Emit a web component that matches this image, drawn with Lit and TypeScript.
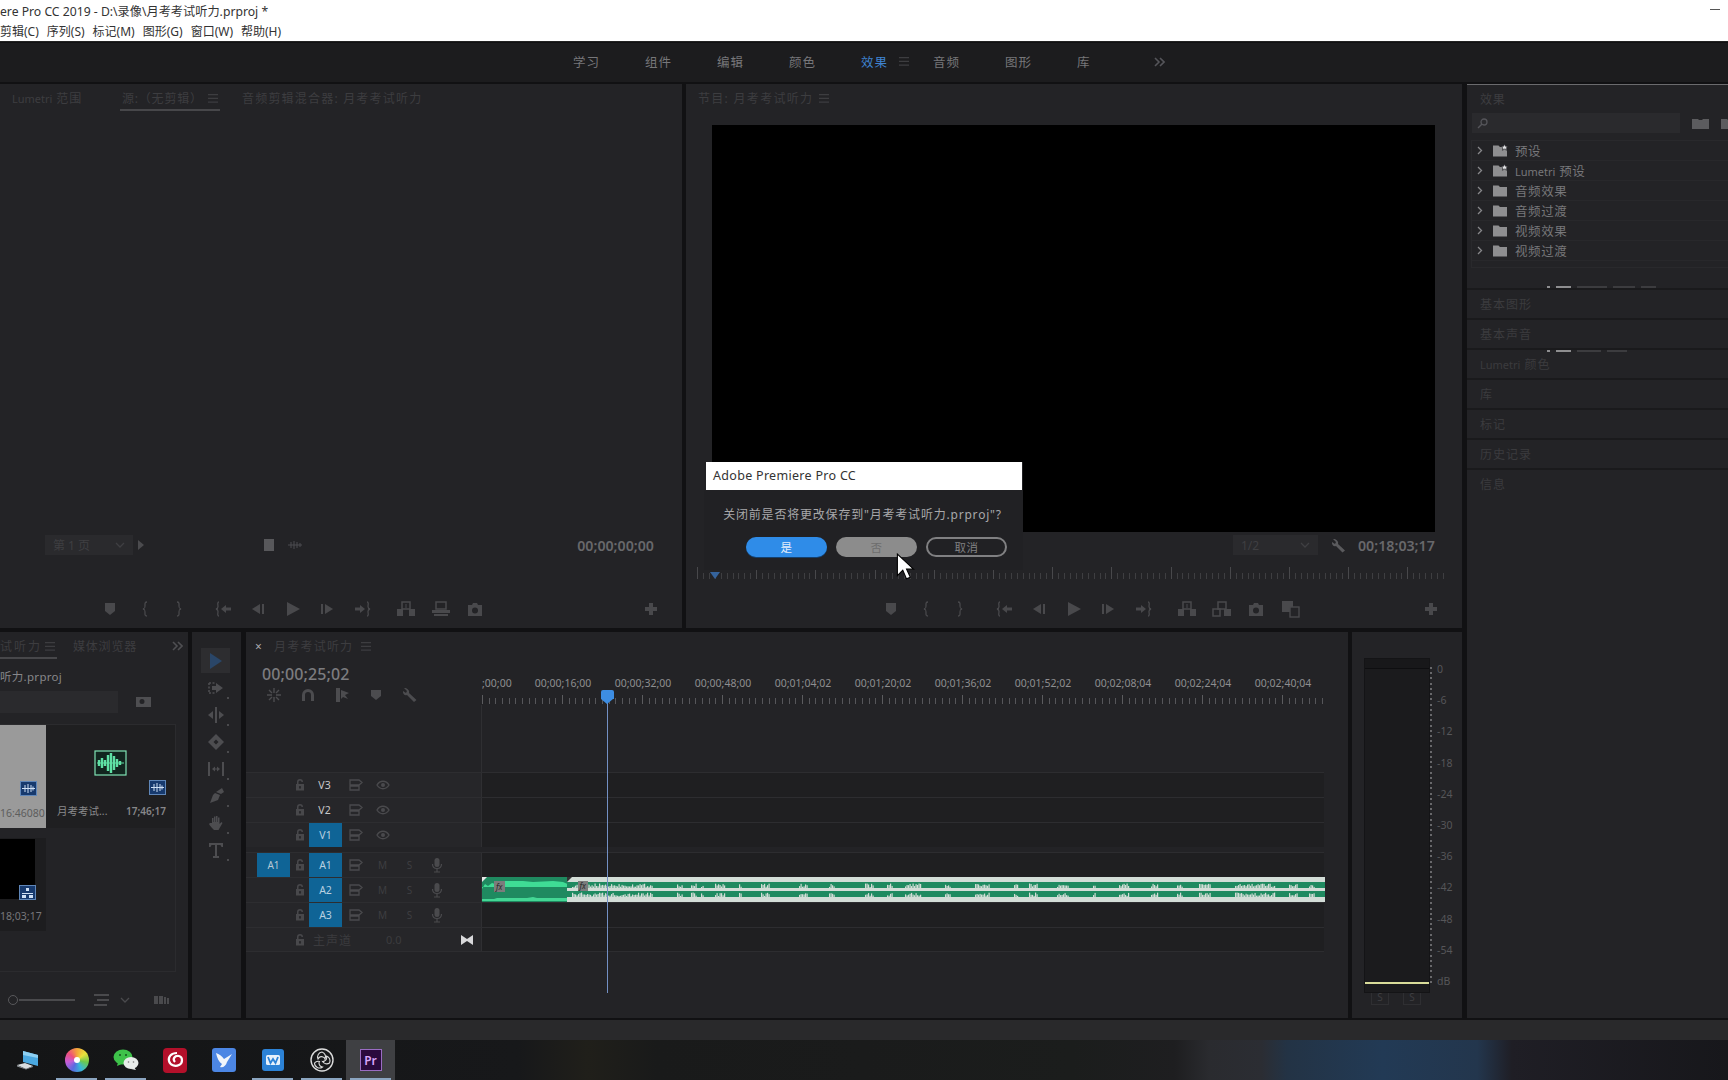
import { LitElement, css, html, svg } from 'lit';
import { customElement } from 'lit/decorators.js';

const icon = (w: number, h: number, body: unknown) =>
  html`<svg width=${w} height=${h} viewBox="0 0 ${w} ${h}" fill="currentColor">${body}</svg>`;

// transport strip icons, shared by the source and program monitors
const marker = icon(14, 14, svg`<path d="M2 1h10v8l-5 4-5-4z"/>`);
const braceL = icon(10, 16, svg`<path d="M7 1C4.500 1 5 3 5 5S5 7.500 3 8c2 .5 2 1 2 3s-.5 4 2 4" fill="none" stroke="currentColor" stroke-width="1.300"/>`);
const braceR = icon(10, 16, svg`<path d="M3 1c2.500 0 2 2 2 4s0 2.500 2 3c-2 .5-2 1-2 3s.5 4-2 4" fill="none" stroke="currentColor" stroke-width="1.300"/>`);
const goIn = icon(18, 16, svg`<path d="M4 1C2 1 3 4 3 5.500S3 7.500 1 8c2 .5 2 1 2 2.500S2 15 4 15" fill="none" stroke="currentColor" stroke-width="1.300"/><path d="M6 8l5-4v2.500h5v3h-5V12z"/>`);
const goOut = icon(18, 16, svg`<path d="M14 1c2 0 1 3 1 4.500s0 2 2 2.500c-2 .5-2 1-2 2.500s1 4.500-1 4.500" fill="none" stroke="currentColor" stroke-width="1.300"/><path d="M12 8L7 4v2.500H2v3h5V12z"/>`);
const stepBack = icon(14, 14, svg`<path d="M9 2v10L1 7z"/><rect x="11" y="2" width="2" height="10"/>`);
const play = icon(16, 16, svg`<path d="M2 1l13 7-13 7z"/>`);
const stepFwd = icon(14, 14, svg`<rect x="1" y="2" width="2" height="10"/><path d="M5 2v10l8-5z"/>`);
const insert = icon(20, 16, svg`<path d="M6 1h8v7H6z" fill="none" stroke="currentColor" stroke-width="1.500"/><path d="M1 8h6v7H1zM13 8h6v7h-6z"/><path d="M10 3v4" stroke="currentColor"/>`);
const overwrite = icon(20, 16, svg`<path d="M5 1h10v7H5z" fill="none" stroke="currentColor" stroke-width="1.500"/><path d="M1 9h18v3H1zM3 13h14v2H3z"/>`);
const insert2 = icon(20, 16, svg`<path d="M6 1h8v7H6z" fill="none" stroke="currentColor" stroke-width="1.500"/><path d="M1 8h7v7H1z" fill="none" stroke="currentColor" stroke-width="1.500"/><path d="M12 8h7v7h-7z"/>`);
const camera = icon(16, 15, svg`<path fill-rule="evenodd" d="M1 3h4l1-2h4l1 2h4v11H1zM8 5.500a3 3 0 100 6 3 3 0 000-6z"/>`);
const compare = icon(20, 18, svg`<rect x="1" y="1" width="11" height="11"/><rect x="9" y="7" width="9" height="10" fill="#242427" stroke="currentColor" stroke-width="1.400"/>`);
const plus = icon(14, 14, svg`<path d="M5 1h4v4h4v4H9v4H5V9H1V5h4z"/>`);
const menuLines = icon(10, 9, svg`<path d="M0 0h10v1.200H0zM0 3.800h10V5H0zM0 7.600h10v1.200H0z"/>`);
const chevDown = icon(10, 6, svg`<path d="M1 1l4 4 4-4" fill="none" stroke="currentColor" stroke-width="1.300"/>`);
const chevDouble = icon(11, 10, svg`<path d="M1 1l4 4-4 4M6 1l4 4-4 4" fill="none" stroke="currentColor" stroke-width="1.600"/>`);
const wrench = icon(15, 15, svg`<path d="M2 1l3 3-1 2-3-2c-.5 3 2 5 4 4l6.500 6.500 2.500-2L7 6C8 3.500 5 .5 2 1z"/>`);

const lock = icon(10, 12, svg`<path fill-rule="evenodd" d="M1 5h1V3a3 3 0 016 0h-1.500a1.500 1.500 0 00-3 0v2H9v6.500H1zM5 7a1 1 0 00-.5 1.900V10h1V8.900A1 1 0 005 7z"/>`);
const toggle = icon(14, 12, svg`<path d="M1 1h9l3 2.500L10 6H1zM1 7h9v4H1z" fill="none" stroke="currentColor" stroke-width="1.300"/>`);
const eye = icon(14, 10, svg`<path d="M1 5c3-5 9-5 12 0-3 5-9 5-12 0z" fill="none" stroke="currentColor" stroke-width="1.400"/><circle cx="7" cy="5" r="2"/>`);
const mic = icon(12, 16, svg`<rect x="3.500" y="1" width="5" height="9" rx="2.500"/><path d="M1.500 7c0 6 9 6 9 0M6 12v3M3 15h6" fill="none" stroke="currentColor" stroke-width="1.200"/>`);

const badgeAudio = icon(17, 15, svg`<rect x=".5" y=".5" width="16" height="14" fill="#173a6e" stroke="#5f86b8"/><path d="M2 7.500h13M5 4v7M8 3v9M11 4v7M13 5.500v4" stroke="#cfe0f5" fill="none"/>`);
const badgeSeq = icon(17, 15, svg`<rect x=".5" y=".5" width="16" height="14" fill="#173a6e" stroke="#5f86b8"/><path d="M7 3h3v3H7zM3 8h11v1H3zM3 10h4v3H3zM10 10h4v3h-4z" fill="#cfe0f5"/>`);

const folder = (star: boolean) => html`<svg class="folder" width="16" height="13" viewBox="0 0 16 13">
  <path d="M1 3V1.500h5.500L8 3h7v9.500H1z" fill="#8e8e90"/>
  ${star ? svg`<path d="M12.500 0l1 2.200 2.300.2-1.700 1.600.5 2.300-2.100-1.200-2.100 1.200.5-2.300L9.200 2.400l2.300-.2z" fill="#e0e0e2" stroke="#232326" stroke-width=".7"/>` : ''}
</svg>`;

// small deterministic noise so the waveform stays the same between runs
const noise = (i: number) => {
  const v = Math.sin(i * 12.9898) * 43758.5453;
  return v - Math.floor(v);
};

const clusters: [number, number][] = [
  [5, 80], [110, 6], [124, 5], [134, 3], [148, 10], [172, 3], [194, 8], [232, 8], [262, 5], [298, 9],
  [320, 5], [338, 16], [378, 6], [408, 14], [447, 4], [462, 8], [490, 12], [526, 3], [552, 10], [584, 7],
  [610, 5], [632, 12], [668, 40], [722, 8], [742, 6],
];

@customElement('app-root')
export class AppRoot extends LitElement {
  static styles = css`
    :host {
      display: block;
      width: 1728px;
      height: 1080px;
      overflow: hidden;
      position: relative;
      background: #111113;
      font-family: "Noto Sans", "Noto Sans CJK SC", sans-serif;
      color: #3d3d40;
      font-size: 12px;
    }
    svg { display: block; flex: none; }
    .lat { letter-spacing: 0; font-size: 11px; }

    /* window chrome */
    .titlebar {
      height: 42px;
      background: #fff;
      color: #333;
      font-size: 12.200px;
      display: flex;
      flex-direction: column;
      box-sizing: border-box;
      padding-top: 2px;
      position: relative;
      border-bottom: 1px solid #222;
    }
    .titlebar .line { height: 19px; line-height: 19px; white-space: nowrap; }
    .menu { display: flex; gap: 8px; margin-top: 1px; font-size: 12px; }
    .minimize { position: absolute; top: 9px; right: 8px; width: 10px; height: 1px; background: #555; }

    .workspaces {
      height: 39px;
      margin-top: 1px;
      padding: 0 0 2px 573px;
      background: #1c1c1e;
      display: flex;
      align-items: center;
      color: #77777a;
      font-size: 12.500px;
      letter-spacing: 1px;
      box-sizing: border-box;
    }
    .workspaces span { width: 72px; flex: none; }
    .workspaces .active { color: #3f83d0; width: 38px; }
    .workspaces .tab-menu { width: 34px; color: #3d3d40; display: flex; }
    .workspaces .more { color: #55555a; margin-left: 5px; }

    .main { display: flex; gap: 5px; height: 934px; margin-top: 2px; }
    .left { width: 1462px; display: flex; flex-direction: column; gap: 4px; flex: none; }
    .top-row { display: flex; gap: 4px; height: 544px; flex: none; }
    .bottom-row { display: flex; height: 386px; flex: none; }
    .panel { background: #232326; position: relative; display: flex; flex-direction: column; box-sizing: border-box; }
    .tabs { height: 28px; display: flex; align-items: center; flex: none; letter-spacing: .8px; white-space: nowrap; }
    .tab-on { display: flex; align-items: center; gap: 4px; height: 100%; position: relative; }
    .tab-on::after { content: ""; position: absolute; left: -2px; right: -2px; bottom: 1px; height: 2px; background: #47474a; }

    /* monitors */
    .source { width: 682px; }
    .source .tabs { padding-left: 12px; }
    .source .tab-lumetri { width: 110px; flex: none; }
    .source .tab-on { width: 96px; flex: none; justify-content: space-between; }
    .source .tab-mix { margin-left: 24px; letter-spacing: 1.200px; }
    .mon-body { flex: 1; }
    .mon-info { height: 22px; display: flex; align-items: center; flex: none; }
    .timecode { font-size: 14.200px; font-weight: 600; color: #68686b; letter-spacing: 0; }
    .dropdown {
      background: #2a2a2d;
      height: 20px;
      display: flex;
      align-items: center;
      justify-content: space-between;
      padding: 0 8px;
      box-sizing: border-box;
      color: #3f3f42;
    }
    .source .mon-info { padding-left: 45px; }
    .source .dropdown { width: 88px; }
    .tri { width: 0; height: 0; border-left: 6px solid #4b4b4e; border-top: 5px solid transparent; border-bottom: 5px solid transparent; margin-left: 5px; }
    .clip-btn { width: 10px; height: 12px; background: #58585b; margin-left: 120px; }
    .wave-btn { color: #4d4d50; margin-left: 14px; }
    .source .timecode { margin-left: auto; margin-right: 28px; }

    .transport { height: 32px; display: flex; align-items: center; color: #49494c; flex: none; }
    .transport > div { width: 34.500px; flex: none; display: flex; justify-content: center; }
    .transport .sep { margin-left: 10px; }
    .transport .add { margin-left: auto; margin-right: 24px; width: auto; }
    .source .transport { padding-left: 93px; margin-top: 37px; }
    .source .foot-pad { height: 3px; flex: none; }
    .program { width: 776px; }
    .program .tabs { padding-left: 12px; gap: 6px; letter-spacing: 1.300px; }
    .program .transport { padding-left: 188px; margin-top: 14px; }
    .video { background: #000; height: 407px; margin: 13px 27px 0 26px; flex: none; }
    .program .mon-info { margin-top: 2px; padding-left: 547px; }
    .program .dropdown { width: 85px; }
    .program .wrench { color: #5a5a5d; margin-left: 13px; }
    .program .timecode { margin-left: 12px; }
    .mon-ruler {
      height: 12px;
      margin: 11px 15px 0 11px;
      flex: none;
      position: relative;
      background:
        repeating-linear-gradient(90deg, #48484b 0 1px, transparent 1px 59.200px) 0 0 / 100% 12px no-repeat,
        repeating-linear-gradient(90deg, #3e3e41 0 1px, transparent 1px 5.920px) 0 100% / 100% 6px no-repeat;
    }
    .mon-ruler .mark { position: absolute; left: 13px; top: 5px; width: 0; height: 0; border-left: 5px solid transparent; border-right: 5px solid transparent; border-top: 7px solid #35639c; }

    /* project panel */
    .project { width: 188px; overflow: hidden; }
    .project .tabs { gap: 18px; }
    .project .tab-on { letter-spacing: 2px; gap: 3px; }
    .project .tabs .more { margin-left: auto; margin-right: 5px; color: #4f4f52; }
    .proj-name { height: 20px; line-height: 20px; color: #87878a; font-size: 11.500px; margin-top: 7px; flex: none; letter-spacing: .3px; }
    .proj-search { display: flex; align-items: center; height: 22px; margin-top: 4px; flex: none; }
    .proj-field { width: 118px; height: 100%; background: #2a2a2d; }
    .proj-folder { margin-left: 18px; color: #4e4e51; }
    .bin {
      width: 176px;
      height: 248px;
      margin-top: 11px;
      flex: none;
      box-sizing: border-box;
      border: 1px solid #2b2b2e;
      border-left: 0;
      display: grid;
      grid-template-columns: 46px 129px;
      grid-template-rows: 103px 1fr;
    }
    .tile { display: flex; flex-direction: column; position: relative; font-size: 10.500px; }
    .thumb-grey { background: #9a9a9a; color: #5d5d5d; }
    .tile-audio { background: #1f1f21; color: #8a8a8c; }
    .tile-seq { background: #1d1d1f; margin-top: 10px; color: #77777a; height: 93px; }
    .thumb-black { background: #000; width: 35px; height: 60px; margin-top: 1px; }
    .tile-seq .seq-row { display: flex; justify-content: flex-end; margin: -14px 10px 0 0; }
    .tile-seq .seq-time { margin-top: 9px; line-height: 15px; }
    .tile-body { flex: 1; display: flex; flex-direction: column; justify-content: flex-end; }
    .grey-badge { display: flex; justify-content: flex-end; padding-right: 9px; }
    .grey-time { line-height: 15px; margin: 10px 0 7px; text-align: right; padding-right: 9px; white-space: nowrap; }
    .audio-icon { margin: 25px auto 0; }
    .audio-badge { display: flex; justify-content: flex-end; padding-right: 9px; margin-top: 4px; }
    .audio-meta { display: flex; justify-content: space-between; align-items: center; padding: 0 9px 0 11px; margin-top: 9px; line-height: 15px; }
    .audio-meta b { font-weight: 600; color: #87878a; font-size: 10px; }
    .proj-foot { display: flex; align-items: center; height: 20px; margin-top: 18px; color: #4a4a4d; flex: none; }
    .knob { width: 10px; height: 10px; border: 1px solid #58585b; border-radius: 50%; margin-left: 8px; flex: none; box-sizing: border-box; }
    .slide { width: 56px; height: 2px; background: #4a4a4d; margin-left: 1px; }
    .proj-foot .lines { margin-left: 19px; }
    .proj-foot .chev { margin-left: 11px; }
    .proj-foot .free { margin-left: 24px; }

    /* tools */
    .tools { width: 49px; margin-left: 4px; align-items: center; color: #4d4d50; padding-right: 2px; }
    .tool { height: 27px; display: flex; align-items: center; justify-content: center; flex: none; width: 29px; position: relative; }
    .tool.dot::after { content: ""; position: absolute; right: 1px; bottom: 2px; width: 2px; height: 2px; background: #4a4a4d; }
    .tool.on { background: #2d2d30; height: 25px; margin-top: 16px; margin-bottom: 1px; color: #2a4668; }

    /* timeline */
    .timeline { width: 1102px; margin-left: 5px; }
    .timeline .tabs { padding-left: 9px; gap: 8px; letter-spacing: 1.200px; }
    .timeline .tabs .close { color: #a9a9ab; font-size: 12px; margin-right: 3px; }
    .tl-body { width: 1078px; flex: 1; position: relative; }
    .tl-top { height: 112px; display: grid; grid-template-columns: 235px 1fr; }
    .tl-tc { font-size: 16px; color: #7c7c7f; padding: 4px 0 0 16px; line-height: 20px; font-weight: 500; letter-spacing: .1px; }
    .tl-tools { display: flex; color: #4c4c4f; margin: 3px 0 0 11px; }
    .tl-tools div { width: 34px; display: flex; justify-content: center; }
    .ruler-col { border-left: 1px solid #2f2f32; border-image: linear-gradient(#0000 45px, #2f2f32 45px) 1; }
    .labels { display: flex; height: 17px; margin-top: 15px; font-size: 10.500px; color: #8e8e90; line-height: 17px; }
    .labels span { width: 80px; text-align: center; flex: none; }
    .labels .first { width: 41px; text-align: left; }
    .ticks {
      height: 9px;
      margin-top: 3px;
      background:
        repeating-linear-gradient(90deg, #5c5c5f 0 1px, transparent 1px 80px) 0 0 / 100% 9px no-repeat,
        repeating-linear-gradient(90deg, #56565a 0 1px, transparent 1px 6.667px) 0 100% / 100% 6px no-repeat;
    }
    .row { height: 25px; display: flex; box-sizing: border-box; border-top: 1px solid #2d2d30; }
    .row.gap-after { margin-bottom: 5px; }
    .row.last { border-bottom: 1px solid #2d2d30; height: 25px; }
    .head { width: 235px; flex: none; display: flex; align-items: center; background: #262629; color: #48484b; }
    .lane { flex: 1; background: #1f1f21; border-left: 1px solid #2f2f32; position: relative; }
    .patch { width: 33px; height: 100%; margin-left: 11px; flex: none; display: flex; align-items: center; justify-content: center; font-size: 10px; color: #b8c8d4; }
    .patch.on { background: #0f6496; }
    .slot-lock { width: 19px; display: flex; justify-content: center; flex: none; }
    .target { width: 31px; margin-right: 2px; height: 100%; flex: none; display: flex; align-items: center; justify-content: center; font-size: 10.500px; color: #c8c8ca; }
    .target.on { background: #0f6496; color: #b8d0e0; width: 33px; margin-right: 0; }
    .slot { width: 27px; display: flex; justify-content: center; flex: none; font-size: 10px; color: #3e3e41; }
    .slot.ic { color: #4a4a4d; }
    .master-name { color: #3b3b3e; letter-spacing: 1px; width: 77px; padding-left: 4px; box-sizing: border-box; }
    .master-val { color: #3c3c3f; font-size: 11px; }
    .bow { margin-left: auto; margin-right: 8px; color: #d8d8da; }

    .clip { position: absolute; left: 0; right: 0; top: -1px; height: 25px; display: flex; }
    .playhead { position: absolute; left: 361px; top: 30px; bottom: 25px; width: 1px; background: #7390c4; }
    .playhead::before { content: ""; position: absolute; left: -6px; top: 0; width: 13px; height: 9px; background: #3d8de2; border-radius: 2px 2px 0 0; }
    .playhead::after { content: ""; position: absolute; left: -6px; top: 9px; border-left: 6.500px solid transparent; border-right: 6.500px solid transparent; border-top: 5px solid #3d8de2; }

    /* meter */
    .meter { width: 110px; margin-left: 4px; padding: 26px 0 0 12px; }
    .meter-wrap { display: flex; height: 335px; }
    .meter-bar { width: 66px; background: #1b1b1d; border: 1px solid #141416; box-sizing: border-box; position: relative; display: flex; flex-direction: column; }
    .meter-peak { height: 9px; background: #18181a; border-bottom: 1px solid #0e0e10; flex: none; }
    .meter-floor { margin-top: auto; height: 2px; background: #d9dc9a; margin-bottom: 8px; flex: none; }
    .scale {
      width: 4px;
      margin: 9px 0 8px 0;
      background: repeating-linear-gradient(#68686b 0 2px, transparent 2px 5.230px);
      background-size: 2px 100%;
      background-repeat: no-repeat;
      background-position: 0 0;
    }
    .db { display: flex; flex-direction: column; justify-content: space-between; margin: 5px 0 0 3px; height: 325px; color: #565659; font-size: 10.500px; line-height: 13px; }
    .solos { display: flex; gap: 14px; margin: -5px 0 0 7px; }
    .solos span { width: 18px; height: 17px; border: 1px solid #2f2f32; box-sizing: border-box; display: flex; align-items: center; justify-content: center; font-size: 10px; color: #3e3e41; }

    /* effects column */
    .right { flex: 1; border-top: 1px solid #6b6b6e; background: #232326; position: relative; }
    .right .tabs { padding-left: 13px; height: 28px; }
    .fx-search { display: flex; align-items: center; height: 20px; margin: 0 0 0 5px; flex: none; }
    .fx-field { width: 208px; height: 20px; background: #2a2a2d; display: flex; align-items: center; padding-left: 5px; box-sizing: border-box; color: #55555a; flex: none; }
    .fx-search .fxi { color: #5c5c5f; margin-left: 12px; flex: none; }
    .tree { margin: 7px 0 0 4px; border: 1px solid #29292c; border-right: 0; height: 128px; box-sizing: border-box; }
    .tree-row { height: 20px; display: flex; align-items: center; border-bottom: 1px solid #28282b; color: #77777a; font-size: 12.500px; letter-spacing: .6px; box-sizing: border-box; }
    .tree-row .ch { width: 20px; padding-left: 5px; box-sizing: border-box; color: #87878a; flex: none; }
    .tree-row .folder { margin-right: 7px; }
    .frag { height: 3px; margin-top: 17px; display: flex; align-items: center; padding-left: 80px; gap: 6px; }
    .frag i { height: 2px; background: #8e8e90; display: block; }
    .frag i.dim { background: #3c3c3f; }
    .frag.second { position: absolute; left: 0; top: 264px; margin: 0; }
    .collapsed { height: 30px; display: flex; align-items: center; padding-left: 13px; border-top: 2px solid #1a1a1c; box-sizing: border-box; color: #3b3b3e; letter-spacing: 1px; }

    /* bottom of screen */
    .status { height: 20px; background: #29292b; margin-top: 2px; }
    .taskbar {
      height: 40px;
      display: flex;
      align-items: center;
      position: relative;
      background: linear-gradient(90deg, #141516 0, #17181a 30%, #201f1a 34%, #191a1a 38%, #1a1b1b 50%, #1b1d1c 62%, #1e1e20 68%, #2a2b2f 70%, #2b2d33 73%, #233345 74.500%, #223a55 80%, #23364d 85.500%, #1f1e25 87.500%, #17171b 100%);
    }
    .task { width: 49px; height: 40px; flex: none; display: flex; align-items: center; justify-content: center; position: relative; }
    .task:first-child { margin-left: 3px; }
    .task.open::after { content: ""; position: absolute; left: 4px; right: 4px; bottom: 0; height: 2px; background: #8ba5c0; }
    .task.sel { background: #3f4043; }
    .pr { width: 22px; height: 22px; background: #2a0a3d; border: 1px solid #9a6cc2; color: #d7a5fb; display: flex; align-items: center; justify-content: center; font-size: 12px; font-weight: 600; box-sizing: border-box; }
    .swirl { width: 24px; height: 24px; border-radius: 50%; background: conic-gradient(#f3a43a, #e9e23c, #6cc84c, #37b7d8, #5a6ae0, #c35cd8, #ee4f7a, #f3a43a); display: flex; align-items: center; justify-content: center; }
    .swirl::after { content: ""; width: 6px; height: 6px; background: #fff; border-radius: 50%; }

    /* save dialog, floats over the program monitor */
    .dialog { position: absolute; left: 704px; top: 462px; width: 319px; height: 108px; background: #212124; display: flex; flex-direction: column; }
    .dlg-title { background: #fff; color: #333; height: 28px; margin-left: 2px; width: 316px; line-height: 28px; padding-left: 7px; box-sizing: border-box; font-size: 12.500px; letter-spacing: .3px; flex: none; }
    .dlg-text { text-align: center; color: #a8a8aa; font-size: 12px; letter-spacing: .8px; margin-top: 16px; line-height: 17px; padding-right: 2px; }
    .dlg-btns { display: flex; gap: 9px; margin: 14px 0 0 42px; }
    .btn { width: 81px; height: 20px; border-radius: 10px; display: flex; align-items: center; justify-content: center; font-size: 11.500px; box-sizing: border-box; letter-spacing: .5px; }
    .btn.yes { background: #2f8ce8; color: #e4eefa; box-shadow: 0 1px 0 #14406e; }
    .btn.no { background: #8c8c8c; color: #6d6d6d; }
    .btn.cancel { border: 2px solid #808082; color: #808082; }
    .cursor { position: absolute; left: 896px; top: 553px; }
  `;

  private transport(withCompare: boolean) {
    return html`<div class="transport">
      <div>${marker}</div><div>${braceL}</div><div>${braceR}</div>
      <div class="sep">${goIn}</div><div>${stepBack}</div><div>${play}</div><div>${stepFwd}</div><div>${goOut}</div>
      <div class="sep">${insert}</div><div>${withCompare ? insert2 : overwrite}</div><div>${camera}</div>
      ${withCompare ? html`<div>${compare}</div>` : ''}
      <div class="add">${plus}</div>
    </div>`;
  }

  private sourceMonitor() {
    return html`<div class="panel source">
      <div class="tabs">
        <span class="tab-lumetri"><span class="lat">Lumetri</span> 范围</span>
        <div class="tab-on"><span>源:（无剪辑）</span>${menuLines}</div>
        <span class="tab-mix">音频剪辑混合器: 月考考试听力</span>
      </div>
      <div class="mon-body"></div>
      <div class="mon-info">
        <div class="dropdown"><span>第 1 页</span>${chevDown}</div>
        <div class="tri"></div>
        <div class="clip-btn"></div>
        <div class="wave-btn">${icon(14, 10, svg`<path d="M0 5h14M3 2v6M6 1v8M9 2v6M12 3v4" stroke="currentColor" fill="none"/>`)}</div>
        <div class="timecode">00;00;00;00</div>
      </div>
      ${this.transport(false)}
      <div class="foot-pad"></div>
    </div>`;
  }

  private programMonitor() {
    return html`<div class="panel program">
      <div class="tabs"><span>节目: 月考考试听力</span>${menuLines}</div>
      <div class="video"></div>
      <div class="mon-info">
        <div class="dropdown"><span>1/2</span>${chevDown}</div>
        <div class="wrench">${wrench}</div>
        <div class="timecode">00;18;03;17</div>
      </div>
      <div class="mon-ruler"><div class="mark"></div></div>
      ${this.transport(true)}
    </div>`;
  }

  private projectPanel() {
    return html`<div class="panel project">
      <div class="tabs">
        <div class="tab-on"><span>试听力</span>${menuLines}</div>
        <span>媒体浏览器</span>
        <span class="more">${chevDouble}</span>
      </div>
      <div class="proj-name">听力.prproj</div>
      <div class="proj-search">
        <div class="proj-field"></div>
        <div class="proj-folder">${icon(15, 12, svg`<path fill-rule="evenodd" d="M0 1h15v10H0zM6 3a2.500 2.500 0 100 5 2.500 2.500 0 000-5z"/>`)}</div>
      </div>
      <div class="bin">
        <div class="tile thumb-grey">
          <div class="tile-body"><div class="grey-badge">${badgeAudio}</div><div class="grey-time">16:46080</div></div>
        </div>
        <div class="tile tile-audio">
          <div class="audio-icon">
            <svg width="33" height="26" viewBox="0 0 33 26">
              <rect x="1" y="1" width="31" height="24" fill="#12251f" stroke="#7fe3b4" stroke-width="1.200"/>
              <path d="M3 13h27" stroke="#5fe0a5"/>
              <path d="M5 10v6M8 8v10M11 10v6M14 5v16M17 3v20M20 6v14M23 9v8M26 11v4" stroke="#5fe0a5" stroke-width="2.400"/>
            </svg>
          </div>
          <div class="audio-badge">${badgeAudio}</div>
          <div class="audio-meta"><span>月考考试...</span><b>17;46;17</b></div>
        </div>
        <div class="tile tile-seq">
          <div class="thumb-black"></div>
          <div class="seq-row">${badgeSeq}</div>
          <div class="seq-time">18;03;17</div>
        </div>
      </div>
      <div class="proj-foot">
        <div class="knob"></div><div class="slide"></div>
        <div class="lines">${icon(15, 12, svg`<path d="M0 0h15v2H0zM3 5h12v2H3zM0 10h13v2H0z"/>`)}</div>
        <div class="chev">${chevDown}</div>
        <div class="free">${icon(15, 8, svg`<path d="M0 0h4v8H0zM5 0h4v8H5zM10 1h2v7h-2zM13 2h2v6h-2z"/>`)}</div>
      </div>
    </div>`;
  }

  private toolsPanel() {
    const tools = [
      svg`<path d="M3 1l12 8-12 8z"/>`,
      svg`<path d="M2 4h7M2 14h7M2 4v10" fill="none" stroke="currentColor" stroke-width="1.600" stroke-dasharray="2 1.500"/><path d="M9 7V4l7 5-7 5v-3H5V7z"/>`,
      svg`<path d="M8 1h2v16H8zM1 9l5-4v8zM17 9l-5-4v8z"/>`,
      svg`<path fill-rule="evenodd" d="M9 1l8 8-8 8-8-8zM9 6.500L6.500 9 9 11.500 11.500 9z"/>`,
      svg`<path d="M1 2h2v14H1zM15 2h2v14h-2zM5 9l3-2.500v2h2v-2L13 9l-3 2.500v-2H8v2z"/>`,
      svg`<path d="M15 1l2 4-3 2-5-2zM8 6l5 2-2 5-8 3 3-8z"/>`,
      svg`<path d="M5 9V4h1.500v4H7V2.500h1.500V8H9V2h1.500v6h.5V3.500h1.500V10l2-2 1 1-4 7H7C5 14 3 12 2 10l1-1z"/>`,
      svg`<path d="M2 2h14v4h-1.500l-1-2H10v11h2v2H6v-2h2V4H4.500l-1 2H2z"/>`,
    ];
    return html`<div class="panel tools">
      ${tools.map((t, i) => html`<div class=${i === 0 ? 'tool on' : 'tool dot'}>${icon(18, 18, t)}</div>`)}
    </div>`;
  }

  private track(name: string, on: boolean, audio: boolean, opts: { patch?: boolean; gapAfter?: boolean } = {}, lane: unknown = '') {
    return html`<div class=${opts.gapAfter ? 'row gap-after' : 'row'}>
      <div class="head">
        <div class=${opts.patch ? 'patch on' : 'patch'}>${opts.patch ? 'A1' : ''}</div>
        <div class="slot-lock">${lock}</div>
        <div class=${on ? 'target on' : 'target'}>${name}</div>
        <div class="slot ic">${toggle}</div>
        ${audio
          ? html`<div class="slot">M</div><div class="slot">S</div><div class="slot ic">${mic}</div>`
          : html`<div class="slot ic">${eye}</div>`}
      </div>
      <div class="lane">${lane}</div>
    </div>`;
  }

  private audioClip() {
    const bars: unknown[] = [];
    let n = 0;
    for (const [start, width] of clusters) {
      for (let x = start; x < start + width; x += 1.5) {
        const a = 1 + noise(n++) * 3.5;
        const b = 1 + noise(n++) * 3.5;
        bars.push(svg`<rect x=${x} y=${11 - a} width="1.200" height=${a} fill="#d3ddd7"/>`);
        bars.push(svg`<rect x=${x} y=${20 - b} width="1.200" height=${b} fill="#d3ddd7"/>`);
      }
    }
    return html`<div class="clip">
      <svg width="85" height="25" viewBox="0 0 85 25">
        <rect width="85" height="25" fill="#1f8a60"/>
        <path d="M0 12L3 7l3 2 4-3 3 1 4-3h24l10 1 20-1 10 1 7 3v2H0z" fill="#3fdc95"/>
        <path d="M0 22h12l3-1h30l6-1 4 1h30v3H0z" fill="#44d795"/>
        <path d="M0 0h5L0 5z" fill="#e8e8e8"/>
        <rect x="12" y="4" width="11" height="11" fill="#7c7c7c"/>
        <text x="14" y="13" font-size="8" font-style="italic" fill="#2b2b2b">fx</text>
      </svg>
      <svg width="758" height="25" viewBox="0 0 758 25">
        <rect width="758" height="25" fill="#d3ddd7"/>
        <rect y="5" width="758" height="6" fill="#1f8a60"/>
        <rect y="14" width="758" height="6" fill="#1f8a60"/>
        ${bars}
        <path d="M0 0h5L0 5z" fill="#333"/>
        <rect x="11" y="4" width="10" height="10" fill="#7c7c7c"/>
        <text x="12.500" y="12" font-size="8" font-style="italic" fill="#2b2b2b">fx</text>
      </svg>
    </div>`;
  }

  private timelinePanel() {
    const labels = ['00;00;16;00', '00;00;32;00', '00;00;48;00', '00;01;04;02', '00;01;20;02', '00;01;36;02', '00;01;52;02', '00;02;08;04', '00;02;24;04', '00;02;40;04'];
    const tools = [
      svg`<path d="M8 1v5M8 10v5M1 8h5M10 8h5M3 3l3 3M13 3l-3 3M3 13l3-3M13 13l-3-3" stroke="currentColor" stroke-width="1.400" fill="none"/>`,
      svg`<path d="M2 14V8a6 6 0 0112 0v6h-3V8a3 3 0 00-6 0v6z"/>`,
      svg`<path d="M2 1h4v14H2zM7 3l8 3-4 2 3 4-5-2-2 2z"/>`,
      svg`<path d="M3 3h10v6l-5 4-5-4z"/>`,
      svg`<path d="M2 1l3 3-1 2-3-2c-.5 3 2 5 4 4l7 7 2.500-2L7 6C8 3.500 5 .5 2 1z"/>`,
    ];
    return html`<div class="panel timeline">
      <div class="tabs"><span class="close">×</span><span>月考考试听力</span>${menuLines}</div>
      <div class="tl-body">
        <div class="tl-top">
          <div>
            <div class="tl-tc">00;00;25;02</div>
            <div class="tl-tools">${tools.map((t) => html`<div>${icon(16, 16, t)}</div>`)}</div>
          </div>
          <div class="ruler-col">
            <div class="labels"><span class="first">;00;00</span>${labels.map((l) => html`<span>${l}</span>`)}</div>
            <div class="ticks"></div>
          </div>
        </div>
        ${this.track('V3', false, false)}
        ${this.track('V2', false, false)}
        ${this.track('V1', true, false, { gapAfter: true })}
        ${this.track('A1', true, true, { patch: true })}
        ${this.track('A2', true, true, {}, this.audioClip())}
        ${this.track('A3', true, true)}
        <div class="row last">
          <div class="head">
            <div class="patch"></div>
            <div class="slot-lock">${lock}</div>
            <div class="master-name">主声道</div>
            <div class="master-val">0.0</div>
            <div class="bow">${icon(12, 10, svg`<path d="M0 0l6 4 6-4v10L6 6l-6 4z"/>`)}</div>
          </div>
          <div class="lane"></div>
        </div>
        <div class="playhead"></div>
      </div>
    </div>`;
  }

  private meterPanel() {
    const marks = ['0', '-6', '-12', '-18', '-24', '-30', '-36', '-42', '-48', '-54', 'dB'];
    return html`<div class="panel meter">
      <div class="meter-wrap">
        <div class="meter-bar"><div class="meter-peak"></div><div class="meter-floor"></div></div>
        <div class="scale"></div>
        <div class="db">${marks.map((m) => html`<span>${m}</span>`)}</div>
      </div>
      <div class="solos"><span>S</span><span>S</span></div>
    </div>`;
  }

  private effectsPanel() {
    const rows = [
      { name: html`预设`, star: true },
      { name: html`<span class="lat">Lumetri</span> 预设`, star: true },
      { name: html`音频效果`, star: false },
      { name: html`音频过渡`, star: false },
      { name: html`视频效果`, star: false },
      { name: html`视频过渡`, star: false },
    ];
    const others = [html`基本图形`, html`基本声音`, html`<span class="lat">Lumetri</span>&nbsp;颜色`, html`库`, html`标记`, html`历史记录`, html`信息`];
    return html`<div class="right">
      <div class="tabs"><span>效果</span></div>
      <div class="fx-search">
        <div class="fx-field">${icon(11, 11, svg`<circle cx="7" cy="4" r="3" fill="none" stroke="currentColor" stroke-width="1.300"/><path d="M5 6l-4 4" stroke="currentColor" stroke-width="1.500"/>`)}</div>
        <div class="fxi">${icon(17, 12, svg`<path d="M0 2h6l1 1h3l1-1h6v10H0z"/>`)}</div>
        <div class="fxi">${icon(17, 12, svg`<path d="M0 2h6l1 1h3l1-1h6v10H0z"/>`)}</div>
      </div>
      <div class="tree">
        ${rows.map((r) => html`<div class="tree-row">
          <div class="ch">${icon(6, 9, svg`<path d="M1 1l3.500 3.500L1 8" fill="none" stroke="currentColor" stroke-width="1.300"/>`)}</div>
          ${folder(r.star)}<span>${r.name}</span>
        </div>`)}
      </div>
      <div class="frag"><i style="width:3px"></i><i style="width:15px"></i><i class="dim" style="width:30px"></i><i class="dim" style="width:22px"></i><i class="dim" style="width:15px"></i></div>
      <div class="frag second"><i style="width:3px"></i><i style="width:15px"></i><i class="dim" style="width:24px"></i><i class="dim" style="width:20px"></i></div>
      ${others.map((o) => html`<div class="collapsed">${o}</div>`)}
    </div>`;
  }

  private taskbar() {
    return html`<div class="taskbar">
      <div class="task">
        <svg width="24" height="22" viewBox="0 0 24 22">
          <path d="M7 2l15 4v11L7 13z" fill="#4aa8e0"/>
          <path d="M7 2l15 4v3L7 6z" fill="#8dd0f2"/>
          <path d="M1 16l8-2 8 3-7 3z" fill="#d9dde0"/>
          <path d="M1 16v1.500l9 3 7-2.500V17l-7 3z" fill="#8a8f94"/>
        </svg>
      </div>
      <div class="task open"><div class="swirl"></div></div>
      <div class="task open">
        <svg width="26" height="22" viewBox="0 0 26 22">
          <ellipse cx="10" cy="8" rx="9.500" ry="7.500" fill="#3ec24a"/>
          <path d="M5 13l-1 4 5-2z" fill="#3ec24a"/>
          <ellipse cx="18" cy="14" rx="7.500" ry="6" fill="#e8ecea"/>
          <path d="M21 18l2 3-5-1z" fill="#e8ecea"/>
          <circle cx="7" cy="6" r="1" fill="#14501c"/><circle cx="13" cy="6" r="1" fill="#14501c"/>
          <circle cx="15.500" cy="13" r=".8" fill="#777"/><circle cx="20.500" cy="13" r=".8" fill="#777"/>
        </svg>
      </div>
      <div class="task">
        <svg width="24" height="25" viewBox="0 0 24 25">
          <rect width="24" height="25" rx="4" fill="#b3102a"/>
          <path d="M14 5c-6 0-9 4-8 8s6 6 10 4 4-8 0-9-7 3-4 6" fill="none" stroke="#fff" stroke-width="2.200"/>
        </svg>
      </div>
      <div class="task">
        <svg width="24" height="24" viewBox="0 0 24 24">
          <rect width="24" height="24" rx="3" fill="#4c86e4"/>
          <path d="M4 5c3 1 6 3 8 6l8-5-5 8c-1 4-4 6-7 5l2-3c-3-2-5-6-6-11z" fill="#f1f5fb"/>
        </svg>
      </div>
      <div class="task open">
        <svg width="22" height="22" viewBox="0 0 22 22">
          <rect width="22" height="22" rx="3" fill="#2c82d6"/>
          <rect x="4" y="6" width="14" height="10" rx="1.500" fill="#e7f1fb"/>
          <path d="M6 8l2.500 6L11 10l2.500 4L16 8" fill="none" stroke="#2c82d6" stroke-width="1.800"/>
        </svg>
      </div>
      <div class="task open">
        <svg width="24" height="24" viewBox="0 0 24 24">
          <circle cx="12" cy="12" r="11" fill="#17181a" stroke="#dcdcdc" stroke-width="1.400"/>
          <path d="M12 4a5 5 0 00-4 7c1-2 3-3 5-2a3 3 0 012 2 5 5 0 00-3-7zM4.500 15a5 5 0 008 4c-2-.5-3.500-2-3.500-4a3 3 0 01.5-1.500 5 5 0 00-5 1.500zM19.500 15a5 5 0 00-3-7c.5 2 0 4-2 5a3 3 0 01-2 .5 5 5 0 007 1.500z" fill="none" stroke="#dcdcdc" stroke-width="1.100"/>
        </svg>
      </div>
      <div class="task open sel"><div class="pr">Pr</div></div>
    </div>`;
  }

  render() {
    return html`
      <div class="titlebar">
        <div class="line">ere Pro CC 2019 - D:\\录像\\月考考试听力.prproj *</div>
        <div class="line menu">
          <span>剪辑(C)</span><span>序列(S)</span><span>标记(M)</span><span>图形(G)</span><span>窗口(W)</span><span>帮助(H)</span>
        </div>
        <div class="minimize"></div>
      </div>
      <div class="workspaces">
        <span>学习</span><span>组件</span><span>编辑</span><span>颜色</span>
        <span class="active">效果</span><span class="tab-menu">${menuLines}</span>
        <span>音频</span><span>图形</span><span>库</span><span class="more">${chevDouble}</span>
      </div>
      <div class="main">
        <div class="left">
          <div class="top-row">${this.sourceMonitor()}${this.programMonitor()}</div>
          <div class="bottom-row">${this.projectPanel()}${this.toolsPanel()}${this.timelinePanel()}${this.meterPanel()}</div>
        </div>
        ${this.effectsPanel()}
      </div>
      <div class="status"></div>
      ${this.taskbar()}

      <div class="dialog">
        <div class="dlg-title">Adobe Premiere Pro CC</div>
        <div class="dlg-text">关闭前是否将更改保存到"月考考试听力.prproj"?</div>
        <div class="dlg-btns">
          <div class="btn yes">是</div><div class="btn no">否</div><div class="btn cancel">取消</div>
        </div>
      </div>
      <svg class="cursor" width="20" height="28" viewBox="0 0 18 26">
        <path d="M1 1v20l5-5 3.500 8 3.500-1.500L9.500 15H16z" fill="#fff" stroke="#000" stroke-width="1"/>
      </svg>
    `;
  }
}
